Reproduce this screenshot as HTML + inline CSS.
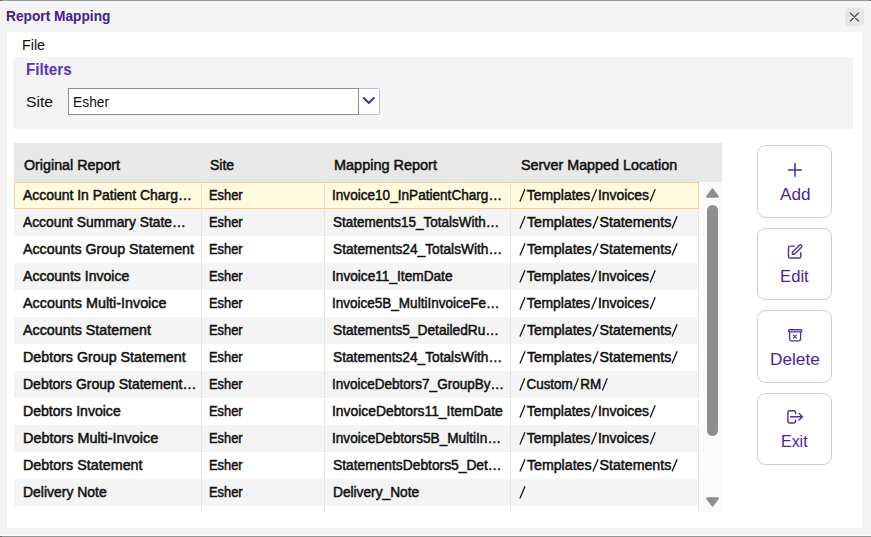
<!DOCTYPE html>
<html><head><meta charset="utf-8">
<style>
*{box-sizing:border-box;margin:0;padding:0}
html,body{width:871px;height:537px;overflow:hidden;background:#f4f4f4;font-family:"Liberation Sans",sans-serif;color:#111}
.abs{position:absolute}
.t{position:absolute;white-space:nowrap;transform-origin:0 50%}
.sl{vertical-align:-2px;margin-right:0.8px}
#topline{left:0;top:0;width:871px;height:1px;background:#9a9a9a}
#tl{left:0;top:0;width:2px;height:1px;background:#6a6a6a}
#tr{left:869px;top:0;width:2px;height:1px;background:#6a6a6a}
#botlight{left:0;top:535px;width:871px;height:1px;background:#fbfbfb}
#botline{left:0;top:536px;width:871px;height:1px;background:#959595}
#bl{left:0;top:536px;width:2px;height:1px;background:#6a6a6a}
#close{left:845px;top:8px;width:19px;height:18px;background:#e6e6e6;border-radius:4px}
#panel{left:7px;top:32px;width:855px;height:496px;background:#fff}
#filters{left:13px;top:57px;width:840px;height:72px;background:#f4f4f4}
#input{left:68px;top:88px;width:291px;height:27px;background:#fff;border:1px solid #8c8c8c}
#ddbtn{left:359px;top:88px;width:21px;height:27px;background:#fff;border:1px solid #bdbddb;border-left:none;border-radius:0 2px 2px 0}
#thead{left:14px;top:143px;width:708px;height:39px;background:#e8e8e8}
.row{position:absolute;left:14px;width:685px;height:27px;background:#fff}
.row.g{background:#f4f4f4}
.row.sel{background:#fff9dd;border:1px solid #f7cf8c}
.dv{position:absolute;width:1px;background:#e4e4e4}
#sb{left:702px;top:182px;width:20px;height:330px;background:#fafafa}
#thumb{left:707px;top:205px;width:11px;height:231px;background:#8e8e8e;border-radius:6px}
.btn{position:absolute;left:757px;width:75px;height:72px;border:1px solid #cdcdcd;border-radius:8.5px;background:#fff}
</style></head><body>
<div class="abs" id="topline"></div><div class="abs" id="tl"></div><div class="abs" id="tr"></div>
<span class="t" style="left:5.76px;top:6.28px;font-size:14.2px;line-height:20px;color:#45208f;font-weight:bold;transform:scaleX(0.9670)">Report Mapping</span>
<div class="abs" id="close"><svg width="19" height="18" viewBox="0 0 19 18"><path d="M5.3 5L13.5 13M13.5 5L5.3 13" stroke="#505050" stroke-width="1.25" stroke-linecap="round"/></svg></div>
<div class="abs" id="panel"></div>
<span class="t" style="left:22.07px;top:33.53px;font-size:15.5px;line-height:22px;color:#111;transform:scaleX(0.9245)">File</span>
<div class="abs" id="filters"></div>
<span class="t" style="left:25.91px;top:58.86px;font-size:16px;line-height:22px;color:#5b33bd;font-weight:bold;transform:scaleX(0.9526)">Filters</span>
<span class="t" style="left:25.98px;top:91.23px;font-size:15.2px;line-height:21px;color:#111;transform:scaleX(1.0316)">Site</span>
<div class="abs" id="input"></div>
<span class="t" style="left:72.98px;top:92.41px;font-size:14.7px;line-height:21px;color:#111;transform:scaleX(0.9418)">Esher</span>
<div class="abs" id="ddbtn"><svg style="position:absolute;left:0;top:0" width="21" height="26" viewBox="0 0 21 26"><path d="M4.8 9L9.8 14L14.8 9" fill="none" stroke="#4f2aa6" stroke-width="2" stroke-linecap="round" stroke-linejoin="round"/></svg></div>
<div class="abs" id="thead"></div>
<span class="t" style="left:23.77px;top:155.15px;font-size:14px;line-height:20px;color:#111;-webkit-text-stroke:0.5px #111;transform:scaleX(1.0202)">Original Report</span>
<span class="t" style="left:210.18px;top:155.15px;font-size:14px;line-height:20px;color:#111;-webkit-text-stroke:0.5px #111;transform:scaleX(0.9992)">Site</span>
<span class="t" style="left:334.26px;top:155.15px;font-size:14px;line-height:20px;color:#111;-webkit-text-stroke:0.5px #111;transform:scaleX(1.0335)">Mapping Report</span>
<span class="t" style="left:520.89px;top:155.15px;font-size:14px;line-height:20px;color:#111;-webkit-text-stroke:0.5px #111;transform:scaleX(1.0237)">Server Mapped Location</span>
<div class="row sel" style="top:182px"></div>
<div class="dv" style="left:201px;top:183px;height:25px;background:#e8e4dc"></div>
<div class="dv" style="left:324px;top:183px;height:25px;background:#e8e4dc"></div>
<div class="dv" style="left:510px;top:183px;height:25px;background:#e8e4dc"></div>
<span class="t" style="left:23.25px;top:185.15px;font-size:14px;line-height:20px;color:#111;-webkit-text-stroke:0.5px #111;transform:scaleX(0.9958)">Account In Patient Charg…</span>
<span class="t" style="left:209.31px;top:185.15px;font-size:14px;line-height:20px;color:#111;-webkit-text-stroke:0.5px #111;transform:scaleX(0.9199)">Esher</span>
<span class="t" style="left:331.92px;top:185.15px;font-size:14px;line-height:20px;color:#111;-webkit-text-stroke:0.5px #111;transform:scaleX(0.9708)">Invoice10_InPatientCharg…</span>
<span class="t" style="left:519.37px;top:185.15px;font-size:14px;line-height:20px;color:#111;-webkit-text-stroke:0.5px #111;transform:scaleX(0.9944)"><svg class="sl" width="7" height="14" viewBox="0 0 7 14"><path d="M0.9 13.6L6 1.2" stroke="#151515" stroke-width="1.3"/></svg>Templates<svg class="sl" width="7" height="14" viewBox="0 0 7 14"><path d="M0.9 13.6L6 1.2" stroke="#151515" stroke-width="1.3"/></svg>Invoices<svg class="sl" width="7" height="14" viewBox="0 0 7 14"><path d="M0.9 13.6L6 1.2" stroke="#151515" stroke-width="1.3"/></svg></span>
<div class="row g" style="top:209px"></div>
<div class="dv" style="left:201px;top:210px;height:26px"></div>
<div class="dv" style="left:324px;top:210px;height:26px"></div>
<div class="dv" style="left:510px;top:210px;height:26px"></div>
<div class="dv" style="left:698px;top:210px;height:26px"></div>
<span class="t" style="left:22.90px;top:212.15px;font-size:14px;line-height:20px;color:#111;-webkit-text-stroke:0.5px #111;transform:scaleX(0.9869)">Account Summary State…</span>
<span class="t" style="left:209.31px;top:212.15px;font-size:14px;line-height:20px;color:#111;-webkit-text-stroke:0.5px #111;transform:scaleX(0.9199)">Esher</span>
<span class="t" style="left:333.41px;top:212.15px;font-size:14px;line-height:20px;color:#111;-webkit-text-stroke:0.5px #111;transform:scaleX(0.9616)">Statements15_TotalsWith…</span>
<span class="t" style="left:519.23px;top:212.15px;font-size:14px;line-height:20px;color:#111;-webkit-text-stroke:0.5px #111;transform:scaleX(1.0138)"><svg class="sl" width="7" height="14" viewBox="0 0 7 14"><path d="M0.9 13.6L6 1.2" stroke="#151515" stroke-width="1.3"/></svg>Templates<svg class="sl" width="7" height="14" viewBox="0 0 7 14"><path d="M0.9 13.6L6 1.2" stroke="#151515" stroke-width="1.3"/></svg>Statements<svg class="sl" width="7" height="14" viewBox="0 0 7 14"><path d="M0.9 13.6L6 1.2" stroke="#151515" stroke-width="1.3"/></svg></span>
<div class="row" style="top:236px"></div>
<div class="dv" style="left:201px;top:237px;height:26px"></div>
<div class="dv" style="left:324px;top:237px;height:26px"></div>
<div class="dv" style="left:510px;top:237px;height:26px"></div>
<div class="dv" style="left:698px;top:237px;height:26px"></div>
<span class="t" style="left:22.89px;top:239.15px;font-size:14px;line-height:20px;color:#111;-webkit-text-stroke:0.5px #111;transform:scaleX(1.0173)">Accounts Group Statement</span>
<span class="t" style="left:209.31px;top:239.15px;font-size:14px;line-height:20px;color:#111;-webkit-text-stroke:0.5px #111;transform:scaleX(0.9199)">Esher</span>
<span class="t" style="left:333.40px;top:239.15px;font-size:14px;line-height:20px;color:#111;-webkit-text-stroke:0.5px #111;transform:scaleX(0.9792)">Statements24_TotalsWith…</span>
<span class="t" style="left:519.23px;top:239.15px;font-size:14px;line-height:20px;color:#111;-webkit-text-stroke:0.5px #111;transform:scaleX(1.0138)"><svg class="sl" width="7" height="14" viewBox="0 0 7 14"><path d="M0.9 13.6L6 1.2" stroke="#151515" stroke-width="1.3"/></svg>Templates<svg class="sl" width="7" height="14" viewBox="0 0 7 14"><path d="M0.9 13.6L6 1.2" stroke="#151515" stroke-width="1.3"/></svg>Statements<svg class="sl" width="7" height="14" viewBox="0 0 7 14"><path d="M0.9 13.6L6 1.2" stroke="#151515" stroke-width="1.3"/></svg></span>
<div class="row g" style="top:263px"></div>
<div class="dv" style="left:201px;top:264px;height:26px"></div>
<div class="dv" style="left:324px;top:264px;height:26px"></div>
<div class="dv" style="left:510px;top:264px;height:26px"></div>
<div class="dv" style="left:698px;top:264px;height:26px"></div>
<span class="t" style="left:23.47px;top:266.15px;font-size:14px;line-height:20px;color:#111;-webkit-text-stroke:0.5px #111;transform:scaleX(1.0043)">Accounts Invoice</span>
<span class="t" style="left:209.31px;top:266.15px;font-size:14px;line-height:20px;color:#111;-webkit-text-stroke:0.5px #111;transform:scaleX(0.9199)">Esher</span>
<span class="t" style="left:331.99px;top:266.15px;font-size:14px;line-height:20px;color:#111;-webkit-text-stroke:0.5px #111;transform:scaleX(0.9758)">Invoice11_ItemDate</span>
<span class="t" style="left:519.37px;top:266.15px;font-size:14px;line-height:20px;color:#111;-webkit-text-stroke:0.5px #111;transform:scaleX(0.9944)"><svg class="sl" width="7" height="14" viewBox="0 0 7 14"><path d="M0.9 13.6L6 1.2" stroke="#151515" stroke-width="1.3"/></svg>Templates<svg class="sl" width="7" height="14" viewBox="0 0 7 14"><path d="M0.9 13.6L6 1.2" stroke="#151515" stroke-width="1.3"/></svg>Invoices<svg class="sl" width="7" height="14" viewBox="0 0 7 14"><path d="M0.9 13.6L6 1.2" stroke="#151515" stroke-width="1.3"/></svg></span>
<div class="row" style="top:290px"></div>
<div class="dv" style="left:201px;top:291px;height:26px"></div>
<div class="dv" style="left:324px;top:291px;height:26px"></div>
<div class="dv" style="left:510px;top:291px;height:26px"></div>
<div class="dv" style="left:698px;top:291px;height:26px"></div>
<span class="t" style="left:23.47px;top:293.15px;font-size:14px;line-height:20px;color:#111;-webkit-text-stroke:0.5px #111;transform:scaleX(1.0242)">Accounts Multi-Invoice</span>
<span class="t" style="left:209.31px;top:293.15px;font-size:14px;line-height:20px;color:#111;-webkit-text-stroke:0.5px #111;transform:scaleX(0.9199)">Esher</span>
<span class="t" style="left:332.00px;top:293.15px;font-size:14px;line-height:20px;color:#111;-webkit-text-stroke:0.5px #111;transform:scaleX(0.9653)">Invoice5B_MultiInvoiceFe…</span>
<span class="t" style="left:519.37px;top:293.15px;font-size:14px;line-height:20px;color:#111;-webkit-text-stroke:0.5px #111;transform:scaleX(0.9944)"><svg class="sl" width="7" height="14" viewBox="0 0 7 14"><path d="M0.9 13.6L6 1.2" stroke="#151515" stroke-width="1.3"/></svg>Templates<svg class="sl" width="7" height="14" viewBox="0 0 7 14"><path d="M0.9 13.6L6 1.2" stroke="#151515" stroke-width="1.3"/></svg>Invoices<svg class="sl" width="7" height="14" viewBox="0 0 7 14"><path d="M0.9 13.6L6 1.2" stroke="#151515" stroke-width="1.3"/></svg></span>
<div class="row g" style="top:317px"></div>
<div class="dv" style="left:201px;top:318px;height:26px"></div>
<div class="dv" style="left:324px;top:318px;height:26px"></div>
<div class="dv" style="left:510px;top:318px;height:26px"></div>
<div class="dv" style="left:698px;top:318px;height:26px"></div>
<span class="t" style="left:23.47px;top:320.15px;font-size:14px;line-height:20px;color:#111;-webkit-text-stroke:0.5px #111;transform:scaleX(1.0209)">Accounts Statement</span>
<span class="t" style="left:209.31px;top:320.15px;font-size:14px;line-height:20px;color:#111;-webkit-text-stroke:0.5px #111;transform:scaleX(0.9199)">Esher</span>
<span class="t" style="left:333.40px;top:320.15px;font-size:14px;line-height:20px;color:#111;-webkit-text-stroke:0.5px #111;transform:scaleX(0.9789)">Statements5_DetailedRu…</span>
<span class="t" style="left:519.23px;top:320.15px;font-size:14px;line-height:20px;color:#111;-webkit-text-stroke:0.5px #111;transform:scaleX(1.0138)"><svg class="sl" width="7" height="14" viewBox="0 0 7 14"><path d="M0.9 13.6L6 1.2" stroke="#151515" stroke-width="1.3"/></svg>Templates<svg class="sl" width="7" height="14" viewBox="0 0 7 14"><path d="M0.9 13.6L6 1.2" stroke="#151515" stroke-width="1.3"/></svg>Statements<svg class="sl" width="7" height="14" viewBox="0 0 7 14"><path d="M0.9 13.6L6 1.2" stroke="#151515" stroke-width="1.3"/></svg></span>
<div class="row" style="top:344px"></div>
<div class="dv" style="left:201px;top:345px;height:26px"></div>
<div class="dv" style="left:324px;top:345px;height:26px"></div>
<div class="dv" style="left:510px;top:345px;height:26px"></div>
<div class="dv" style="left:698px;top:345px;height:26px"></div>
<span class="t" style="left:23.20px;top:347.15px;font-size:14px;line-height:20px;color:#111;-webkit-text-stroke:0.5px #111;transform:scaleX(1.0193)">Debtors Group Statement</span>
<span class="t" style="left:209.31px;top:347.15px;font-size:14px;line-height:20px;color:#111;-webkit-text-stroke:0.5px #111;transform:scaleX(0.9199)">Esher</span>
<span class="t" style="left:333.40px;top:347.15px;font-size:14px;line-height:20px;color:#111;-webkit-text-stroke:0.5px #111;transform:scaleX(0.9792)">Statements24_TotalsWith…</span>
<span class="t" style="left:519.23px;top:347.15px;font-size:14px;line-height:20px;color:#111;-webkit-text-stroke:0.5px #111;transform:scaleX(1.0138)"><svg class="sl" width="7" height="14" viewBox="0 0 7 14"><path d="M0.9 13.6L6 1.2" stroke="#151515" stroke-width="1.3"/></svg>Templates<svg class="sl" width="7" height="14" viewBox="0 0 7 14"><path d="M0.9 13.6L6 1.2" stroke="#151515" stroke-width="1.3"/></svg>Statements<svg class="sl" width="7" height="14" viewBox="0 0 7 14"><path d="M0.9 13.6L6 1.2" stroke="#151515" stroke-width="1.3"/></svg></span>
<div class="row g" style="top:371px"></div>
<div class="dv" style="left:201px;top:372px;height:26px"></div>
<div class="dv" style="left:324px;top:372px;height:26px"></div>
<div class="dv" style="left:510px;top:372px;height:26px"></div>
<div class="dv" style="left:698px;top:372px;height:26px"></div>
<span class="t" style="left:23.06px;top:374.15px;font-size:14px;line-height:20px;color:#111;-webkit-text-stroke:0.5px #111;transform:scaleX(0.9998)">Debtors Group Statement…</span>
<span class="t" style="left:209.31px;top:374.15px;font-size:14px;line-height:20px;color:#111;-webkit-text-stroke:0.5px #111;transform:scaleX(0.9199)">Esher</span>
<span class="t" style="left:332.00px;top:374.15px;font-size:14px;line-height:20px;color:#111;-webkit-text-stroke:0.5px #111;transform:scaleX(0.9650)">InvoiceDebtors7_GroupBy…</span>
<span class="t" style="left:519.45px;top:374.15px;font-size:14px;line-height:20px;color:#111;-webkit-text-stroke:0.5px #111;transform:scaleX(0.9594)"><svg class="sl" width="7" height="14" viewBox="0 0 7 14"><path d="M0.9 13.6L6 1.2" stroke="#151515" stroke-width="1.3"/></svg>Custom<svg class="sl" width="7" height="14" viewBox="0 0 7 14"><path d="M0.9 13.6L6 1.2" stroke="#151515" stroke-width="1.3"/></svg>RM<svg class="sl" width="7" height="14" viewBox="0 0 7 14"><path d="M0.9 13.6L6 1.2" stroke="#151515" stroke-width="1.3"/></svg></span>
<div class="row" style="top:398px"></div>
<div class="dv" style="left:201px;top:399px;height:26px"></div>
<div class="dv" style="left:324px;top:399px;height:26px"></div>
<div class="dv" style="left:510px;top:399px;height:26px"></div>
<div class="dv" style="left:698px;top:399px;height:26px"></div>
<span class="t" style="left:23.05px;top:401.15px;font-size:14px;line-height:20px;color:#111;-webkit-text-stroke:0.5px #111;transform:scaleX(1.0047)">Debtors Invoice</span>
<span class="t" style="left:209.31px;top:401.15px;font-size:14px;line-height:20px;color:#111;-webkit-text-stroke:0.5px #111;transform:scaleX(0.9199)">Esher</span>
<span class="t" style="left:331.94px;top:401.15px;font-size:14px;line-height:20px;color:#111;-webkit-text-stroke:0.5px #111;transform:scaleX(0.9901)">InvoiceDebtors11_ItemDate</span>
<span class="t" style="left:519.37px;top:401.15px;font-size:14px;line-height:20px;color:#111;-webkit-text-stroke:0.5px #111;transform:scaleX(0.9944)"><svg class="sl" width="7" height="14" viewBox="0 0 7 14"><path d="M0.9 13.6L6 1.2" stroke="#151515" stroke-width="1.3"/></svg>Templates<svg class="sl" width="7" height="14" viewBox="0 0 7 14"><path d="M0.9 13.6L6 1.2" stroke="#151515" stroke-width="1.3"/></svg>Invoices<svg class="sl" width="7" height="14" viewBox="0 0 7 14"><path d="M0.9 13.6L6 1.2" stroke="#151515" stroke-width="1.3"/></svg></span>
<div class="row g" style="top:425px"></div>
<div class="dv" style="left:201px;top:426px;height:26px"></div>
<div class="dv" style="left:324px;top:426px;height:26px"></div>
<div class="dv" style="left:510px;top:426px;height:26px"></div>
<div class="dv" style="left:698px;top:426px;height:26px"></div>
<span class="t" style="left:23.03px;top:428.15px;font-size:14px;line-height:20px;color:#111;-webkit-text-stroke:0.5px #111;transform:scaleX(1.0280)">Debtors Multi-Invoice</span>
<span class="t" style="left:209.31px;top:428.15px;font-size:14px;line-height:20px;color:#111;-webkit-text-stroke:0.5px #111;transform:scaleX(0.9199)">Esher</span>
<span class="t" style="left:331.97px;top:428.15px;font-size:14px;line-height:20px;color:#111;-webkit-text-stroke:0.5px #111;transform:scaleX(0.9741)">InvoiceDebtors5B_MultiIn…</span>
<span class="t" style="left:519.37px;top:428.15px;font-size:14px;line-height:20px;color:#111;-webkit-text-stroke:0.5px #111;transform:scaleX(0.9944)"><svg class="sl" width="7" height="14" viewBox="0 0 7 14"><path d="M0.9 13.6L6 1.2" stroke="#151515" stroke-width="1.3"/></svg>Templates<svg class="sl" width="7" height="14" viewBox="0 0 7 14"><path d="M0.9 13.6L6 1.2" stroke="#151515" stroke-width="1.3"/></svg>Invoices<svg class="sl" width="7" height="14" viewBox="0 0 7 14"><path d="M0.9 13.6L6 1.2" stroke="#151515" stroke-width="1.3"/></svg></span>
<div class="row" style="top:452px"></div>
<div class="dv" style="left:201px;top:453px;height:26px"></div>
<div class="dv" style="left:324px;top:453px;height:26px"></div>
<div class="dv" style="left:510px;top:453px;height:26px"></div>
<div class="dv" style="left:698px;top:453px;height:26px"></div>
<span class="t" style="left:23.03px;top:455.15px;font-size:14px;line-height:20px;color:#111;-webkit-text-stroke:0.5px #111;transform:scaleX(1.0243)">Debtors Statement</span>
<span class="t" style="left:209.31px;top:455.15px;font-size:14px;line-height:20px;color:#111;-webkit-text-stroke:0.5px #111;transform:scaleX(0.9199)">Esher</span>
<span class="t" style="left:333.27px;top:455.15px;font-size:14px;line-height:20px;color:#111;-webkit-text-stroke:0.5px #111;transform:scaleX(0.9850)">StatementsDebtors5_Det…</span>
<span class="t" style="left:519.23px;top:455.15px;font-size:14px;line-height:20px;color:#111;-webkit-text-stroke:0.5px #111;transform:scaleX(1.0138)"><svg class="sl" width="7" height="14" viewBox="0 0 7 14"><path d="M0.9 13.6L6 1.2" stroke="#151515" stroke-width="1.3"/></svg>Templates<svg class="sl" width="7" height="14" viewBox="0 0 7 14"><path d="M0.9 13.6L6 1.2" stroke="#151515" stroke-width="1.3"/></svg>Statements<svg class="sl" width="7" height="14" viewBox="0 0 7 14"><path d="M0.9 13.6L6 1.2" stroke="#151515" stroke-width="1.3"/></svg></span>
<div class="row g" style="top:479px"></div>
<div class="dv" style="left:201px;top:480px;height:26px"></div>
<div class="dv" style="left:324px;top:480px;height:26px"></div>
<div class="dv" style="left:510px;top:480px;height:26px"></div>
<div class="dv" style="left:698px;top:480px;height:26px"></div>
<span class="t" style="left:23.18px;top:482.15px;font-size:14px;line-height:20px;color:#111;-webkit-text-stroke:0.5px #111;transform:scaleX(0.9966)">Delivery Note</span>
<span class="t" style="left:209.31px;top:482.15px;font-size:14px;line-height:20px;color:#111;-webkit-text-stroke:0.5px #111;transform:scaleX(0.9199)">Esher</span>
<span class="t" style="left:333.20px;top:482.15px;font-size:14px;line-height:20px;color:#111;-webkit-text-stroke:0.5px #111;transform:scaleX(0.9792)">Delivery_Note</span>
<span class="t" style="left:518.53px;top:482.15px;font-size:14px;line-height:20px;color:#111;-webkit-text-stroke:0.5px #111;transform:scaleX(1.0057)"><svg class="sl" width="7" height="14" viewBox="0 0 7 14"><path d="M0.9 13.6L6 1.2" stroke="#151515" stroke-width="1.3"/></svg></span>
<div class="dv" style="left:201px;top:507px;height:5px"></div>
<div class="dv" style="left:324px;top:507px;height:5px"></div>
<div class="dv" style="left:510px;top:507px;height:5px"></div>
<div class="dv" style="left:698px;top:507px;height:5px"></div>
<div class="abs" id="sb"></div>
<svg class="abs" style="left:705px;top:187px" width="15" height="12" viewBox="0 0 15 12"><path d="M7.5 2.6L12.7 9.6H2.3Z" fill="#8e8e8e" stroke="#8e8e8e" stroke-width="2.4" stroke-linejoin="round"/></svg>
<div class="abs" id="thumb"></div>
<svg class="abs" style="left:705px;top:496px" width="15" height="12" viewBox="0 0 15 12"><path d="M2.3 2.4H12.7L7.5 9.4Z" fill="#8e8e8e" stroke="#8e8e8e" stroke-width="2.4" stroke-linejoin="round"/></svg>
<div class="btn" style="top:145px;height:73px"></div>
<svg class="abs" style="left:783px;top:158px" width="24" height="24" viewBox="0 0 24 24"><path d="M12 4.9V18.8M4.9 12H18.9" stroke="#5030a8" stroke-width="1.6"/></svg>
<span class="t" style="left:779.86px;top:182.65px;font-size:16.3px;line-height:23px;color:#4a22a0;transform:scaleX(1.0533)">Add</span>
<div class="btn" style="top:228px;height:72px"></div>
<svg class="abs" style="left:783px;top:240px" width="24" height="22" viewBox="0 0 24 22"><path d="M11.3 6.1H7.1Q5.5 6.1 5.5 7.7V16.4Q5.5 18 7.1 18H16.2Q17.8 18 17.8 16.4V12.7" fill="none" stroke="#5030a8" stroke-width="1.45" stroke-linecap="round"/><path d="M9.4 14.3V12.3L16.5 5.2Q17.5 4.2 18.5 5.2Q19.5 6.2 18.5 7.2L11.4 14.3Z" fill="none" stroke="#5030a8" stroke-width="1.4" stroke-linejoin="round"/></svg>
<span class="t" style="left:780.43px;top:264.55px;font-size:16.3px;line-height:23px;color:#4a22a0;transform:scaleX(1.0245)">Edit</span>
<div class="btn" style="top:310px;height:73px"></div>
<svg class="abs" style="left:783px;top:325px" width="24" height="20" viewBox="0 0 24 20"><path d="M6.5 4.75H17.75Q18.75 4.75 18.75 5.75V5.95Q18.75 6.95 17.75 6.95H6.5Q5.5 6.95 5.5 5.95V5.75Q5.5 4.75 6.5 4.75Z" fill="none" stroke="#5030a8" stroke-width="1.3"/><path d="M6.6 7V14Q6.6 15.8 8.4 15.8H15.8Q17.6 15.8 17.6 14V7" fill="none" stroke="#5030a8" stroke-width="1.3"/><path d="M10.4 10.2L13.4 13.2M13.4 10.2L10.4 13.2" stroke="#5030a8" stroke-width="1.2" stroke-linecap="round"/></svg>
<span class="t" style="left:769.64px;top:347.75px;font-size:16.3px;line-height:23px;color:#4a22a0;transform:scaleX(1.0580)">Delete</span>
<div class="btn" style="top:393px;height:72px"></div>
<svg class="abs" style="left:783px;top:405px" width="24" height="23" viewBox="0 0 24 23"><path d="M12.6 8.8V7.8Q12.6 5.8 10.6 5.8H6.9Q4.9 5.8 4.9 7.8V16Q4.9 18 6.9 18H10.6Q12.6 18 12.6 16V15.2" fill="none" stroke="#5030a8" stroke-width="1.45" stroke-linecap="round"/><path d="M7.5 11.8H19M16.1 8.5L19.4 11.8L16.1 15.1" fill="none" stroke="#5030a8" stroke-width="1.45" stroke-linecap="round" stroke-linejoin="round"/></svg>
<span class="t" style="left:780.67px;top:429.55px;font-size:16.3px;line-height:23px;color:#4a22a0;transform:scaleX(0.9792)">Exit</span>
<div class="abs" id="botlight"></div>
<div class="abs" id="botline"></div><div class="abs" id="bl"></div>
</body></html>
